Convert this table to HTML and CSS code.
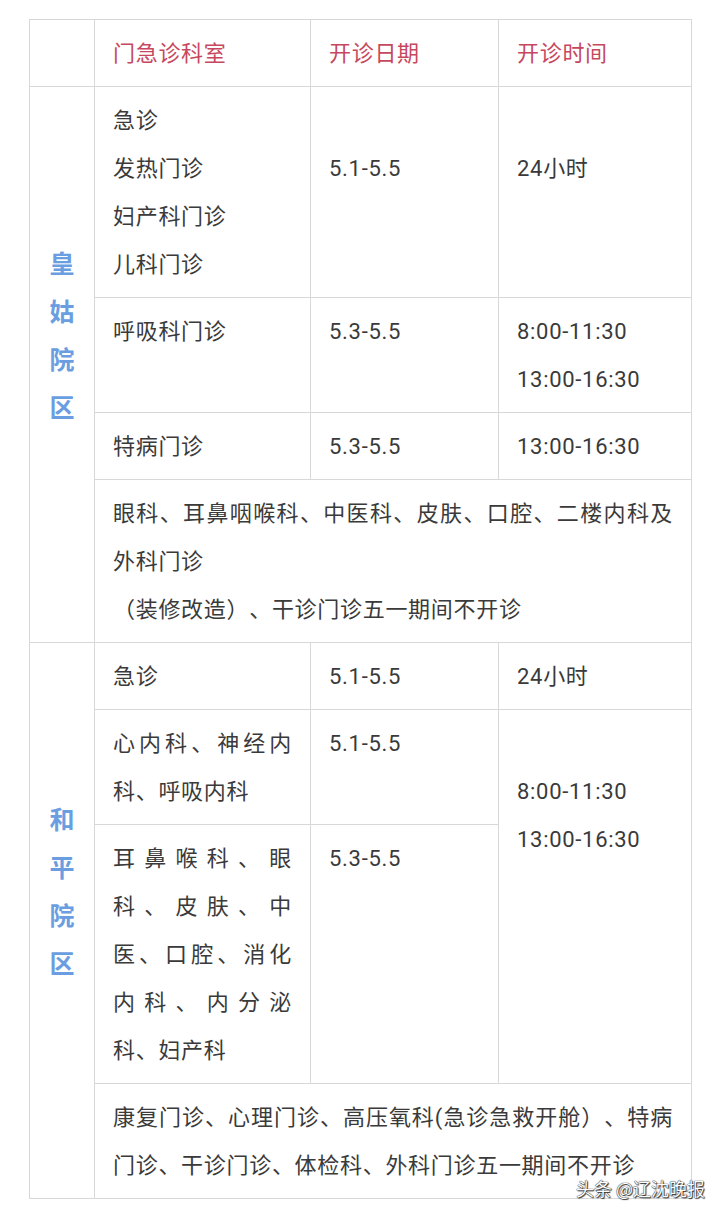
FILE: index.html
```html
<!DOCTYPE html>
<html lang="zh-CN">
<head>
<meta charset="utf-8">
<title>五一门诊安排</title>
<link rel="stylesheet" href="styles.css">
</head>
<body>
<div class="page">
  <table class="sched">
    <colgroup>
      <col class="c-label">
      <col class="c-dept">
      <col class="c-date">
      <col class="c-time">
    </colgroup>
    <thead>
      <tr>
        <th></th>
        <th>门急诊科室</th>
        <th>开诊日期</th>
        <th>开诊时间</th>
      </tr>
    </thead>
    <tbody>
      <tr>
        <td class="label" rowspan="4">皇<br>姑<br>院<br>区</td>
        <td>急诊<br>发热门诊<br>妇产科门诊<br>儿科门诊</td>
        <td class="skip1">5.1-5.5</td>
        <td class="skip1">24小时</td>
      </tr>
      <tr>
        <td>呼吸科门诊</td>
        <td>5.3-5.5</td>
        <td>8:00-11:30<br>13:00-16:30</td>
      </tr>
      <tr>
        <td>特病门诊</td>
        <td>5.3-5.5</td>
        <td>13:00-16:30</td>
      </tr>
      <tr>
        <td colspan="3">眼科、耳鼻咽喉科、中医科、皮肤、口腔、二楼内科及外科门诊<br>（装修改造）、干诊门诊五一期间不开诊</td>
      </tr>
      <tr>
        <td class="label" rowspan="4">和<br>平<br>院<br>区</td>
        <td>急诊</td>
        <td>5.1-5.5</td>
        <td>24小时</td>
      </tr>
      <tr>
        <td>心内科、神经内科、呼吸内科</td>
        <td>5.1-5.5</td>
        <td class="skip1" rowspan="2">8:00-11:30<br>13:00-16:30</td>
      </tr>
      <tr>
        <td>耳鼻喉科、眼科、皮肤、中医、口腔、消化内科、内分泌科、妇产科</td>
        <td>5.3-5.5</td>
      </tr>
      <tr>
        <td colspan="3">康复门诊、心理门诊、高压氧科(急诊急救开舱）、特病门诊、干诊门诊、体检科、外科门诊五一期间不开诊</td>
      </tr>
    </tbody>
  </table>
  <div class="mark">头条 @辽沈晚报</div>
</div>
</body>
</html>
```

FILE: styles.css
```css
html, body {
  margin: 0;
  padding: 0;
  background: #ffffff;
}

.page {
  position: relative;
  width: 720px;
  min-height: 1215px;
  padding-top: 19px;
  box-sizing: border-box;
}

.sched {
  margin-left: 29px;
  width: 662px;
  table-layout: fixed;
  border-collapse: collapse;
  font-family: Roboto, "Noto Sans CJK SC", sans-serif;
  font-size: 22px;
  letter-spacing: 0.7px;
  line-height: 48px;
  color: #3a3a3a;
  text-spacing-trim: space-all;
}

.c-label { width: 65px; }
.c-dept { width: 216px; }
.c-date { width: 188px; }
.c-time { width: 193px; }

.sched th,
.sched td {
  border: 1px solid #d8d8d8;
  padding: 10px 18px 8px 18px;
  vertical-align: top;
  text-align: justify;
}

.sched th {
  font-weight: normal;
  color: #c7485e;
  text-align: left;
}

.sched td.label {
  padding: 154px 0 0 0;
  text-align: center;
  font-size: 25px;
  font-weight: bold;
  color: #6b9ee0;
  letter-spacing: 0;
}

.sched td.skip1 {
  padding-top: 58px;
}

.mark {
  position: absolute;
  right: 15px;
  top: 1174px;
  font-family: "Noto Sans CJK SC", sans-serif;
  font-size: 18px;
  line-height: 28px;
  color: #ffffff;
  text-shadow: 0 0 1px #222, 0 0 1px #222, 1px 1px 1px #333;
}
```
